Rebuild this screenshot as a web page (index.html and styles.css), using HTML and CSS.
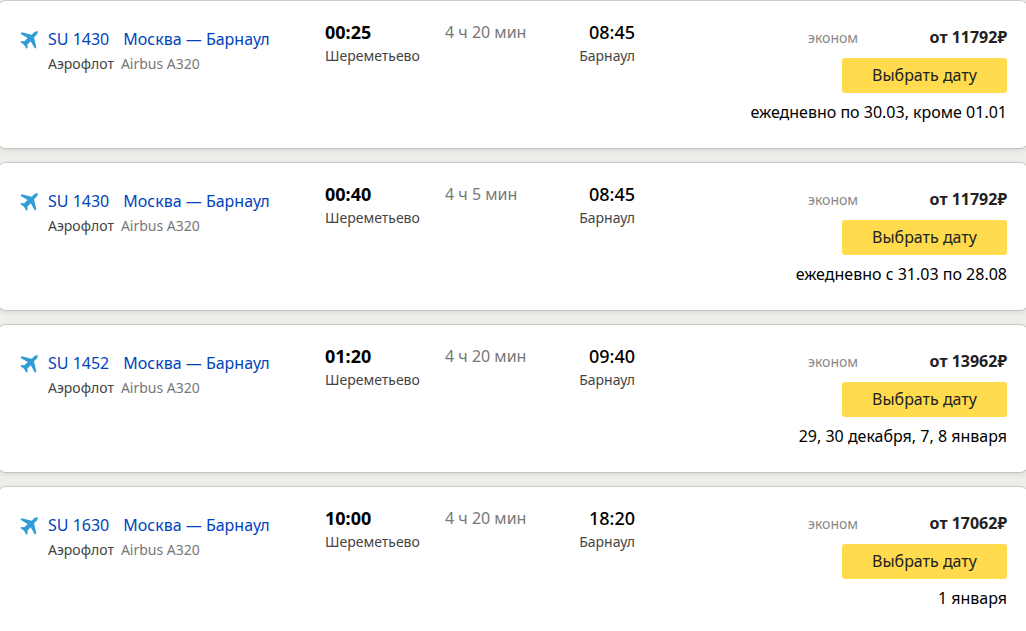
FILE: index.html
```html
<!DOCTYPE html>
<html lang="ru">
<head>
<meta charset="utf-8">
<title>Москва — Барнаул</title>
<link rel="stylesheet" href="styles.css">
</head>
<body>
<svg class="sprite" aria-hidden="true">
  <symbol id="plane" viewBox="0 0 54 54">
    <path d="M53 1C50 0 46 1 43 4L35 11L6 4L1 8L23 21L13 31L4 30L1 33L12 41L19 53L23 50L22 41L32 31L45 53L49 49L42 19L50 11C53 8 54 4 53 1Z"/>
  </symbol>
</svg>
<main class="list">
  <article class="card">
    <svg class="plane" aria-hidden="true"><use href="#plane"/></svg>
    <div class="flight">
      <div class="route"><a class="number" href="#">SU 1430</a><a href="#">Москва — Барнаул</a></div>
      <div class="carrier"><span>Аэрофлот</span><span class="model">Airbus A320</span></div>
    </div>
    <div class="times">
      <div class="point"><div class="time depart">00:25</div><div class="station">Шереметьево</div></div>
      <div class="duration">4 ч 20 мин</div>
      <div class="point arrival"><div class="time">08:45</div><div class="station">Барнаул</div></div>
    </div>
    <div class="offer">
      <div class="fare"><span class="class">эконом</span><span class="price">от 11792₽</span></div>
      <button class="choose" type="button">Выбрать дату</button>
      <div class="days">ежедневно по 30.03, кроме 01.01</div>
    </div>
  </article>
  <article class="card">
    <svg class="plane" aria-hidden="true"><use href="#plane"/></svg>
    <div class="flight">
      <div class="route"><a class="number" href="#">SU 1430</a><a href="#">Москва — Барнаул</a></div>
      <div class="carrier"><span>Аэрофлот</span><span class="model">Airbus A320</span></div>
    </div>
    <div class="times">
      <div class="point"><div class="time depart">00:40</div><div class="station">Шереметьево</div></div>
      <div class="duration">4 ч 5 мин</div>
      <div class="point arrival"><div class="time">08:45</div><div class="station">Барнаул</div></div>
    </div>
    <div class="offer">
      <div class="fare"><span class="class">эконом</span><span class="price">от 11792₽</span></div>
      <button class="choose" type="button">Выбрать дату</button>
      <div class="days">ежедневно с 31.03 по 28.08</div>
    </div>
  </article>
  <article class="card">
    <svg class="plane" aria-hidden="true"><use href="#plane"/></svg>
    <div class="flight">
      <div class="route"><a class="number" href="#">SU 1452</a><a href="#">Москва — Барнаул</a></div>
      <div class="carrier"><span>Аэрофлот</span><span class="model">Airbus A320</span></div>
    </div>
    <div class="times">
      <div class="point"><div class="time depart">01:20</div><div class="station">Шереметьево</div></div>
      <div class="duration">4 ч 20 мин</div>
      <div class="point arrival"><div class="time">09:40</div><div class="station">Барнаул</div></div>
    </div>
    <div class="offer">
      <div class="fare"><span class="class">эконом</span><span class="price">от 13962₽</span></div>
      <button class="choose" type="button">Выбрать дату</button>
      <div class="days">29, 30 декабря, 7, 8 января</div>
    </div>
  </article>
  <article class="card">
    <svg class="plane" aria-hidden="true"><use href="#plane"/></svg>
    <div class="flight">
      <div class="route"><a class="number" href="#">SU 1630</a><a href="#">Москва — Барнаул</a></div>
      <div class="carrier"><span>Аэрофлот</span><span class="model">Airbus A320</span></div>
    </div>
    <div class="times">
      <div class="point"><div class="time depart">10:00</div><div class="station">Шереметьево</div></div>
      <div class="duration">4 ч 20 мин</div>
      <div class="point arrival"><div class="time">18:20</div><div class="station">Барнаул</div></div>
    </div>
    <div class="offer">
      <div class="fare"><span class="class">эконом</span><span class="price">от 17062₽</span></div>
      <button class="choose" type="button">Выбрать дату</button>
      <div class="days">1 января</div>
    </div>
  </article>
</main>
</body>
</html>
```

FILE: styles.css
```css
* {
  box-sizing: border-box;
}

body {
  margin: 0;
  background: #efeeea;
  color: #000;
  font: 16px/24px "Noto Sans", "Open Sans", sans-serif;
  overflow-x: hidden;
}

.sprite {
  display: none;
}

.list {
  display: grid;
  gap: 15px;
  margin: 0 -2px;
  padding-top: 1px;
}

.card {
  display: flex;
  align-items: flex-start;
  padding: 19px 21px 24px 22px;
  background: #fff;
  border-radius: 8px;
  box-shadow: 0 0 0 1px rgba(0, 0, 0, 0.12), 0 2px 6px rgba(0, 0, 0, 0.1);
  white-space: nowrap;
}

.plane {
  flex: none;
  width: 18px;
  height: 18px;
  margin: 11px 10px 0 0;
  fill: #319dd6;
}

.flight {
  flex: none;
  width: 277px;
  padding-top: 7px;
}

.route {
  line-height: 25px;
}

.route a {
  color: #04b;
  text-decoration: none;
}

.route .number {
  margin-right: 14px;
}

.carrier {
  color: #444;
  font-size: 14px;
}

.model {
  margin-left: 7px;
  color: #777;
}

.times {
  display: grid;
  flex: none;
  grid-template-columns: 120px 1fr auto;
  width: 310px;
}

.time {
  font-size: 18px;
  font-weight: 500;
}

.depart {
  font-weight: 700;
}

.station {
  color: #444;
  font-size: 14px;
}

.arrival {
  text-align: right;
}

.duration {
  color: #777;
}

.offer {
  display: flex;
  flex: 1;
  flex-direction: column;
  align-items: flex-end;
  padding-top: 5px;
}

.fare {
  display: flex;
  justify-content: space-between;
  align-items: baseline;
  width: 199px;
}

.class {
  color: #888;
  font-size: 14px;
}

.price {
  color: #222;
  font-weight: 700;
}

.choose {
  width: 165px;
  height: 35px;
  margin: 8px 0 7px;
  padding: 0 0 2px;
  border: 0;
  border-radius: 3px;
  background: #ffdb4d;
  color: #222;
  font: inherit;
}
```
